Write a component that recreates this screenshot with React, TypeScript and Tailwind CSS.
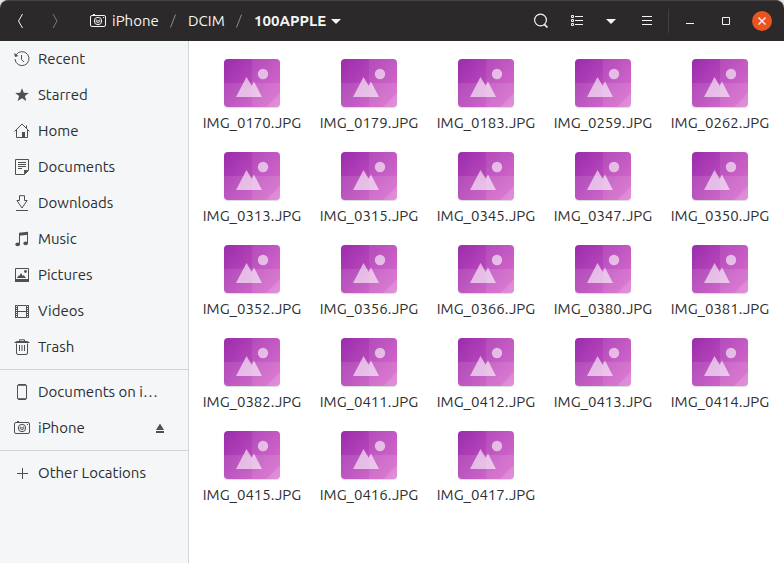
import type { ReactNode } from "react";

const files = [
  "0170", "0179", "0183", "0259", "0262",
  "0313", "0315", "0345", "0347", "0350",
  "0352", "0356", "0366", "0380", "0381",
  "0382", "0411", "0412", "0413", "0414",
  "0415", "0416", "0417",
].map((n) => `IMG_${n}.JPG`);

function Icon({ children }: { children: ReactNode }) {
  return (
    <svg className="size-4 shrink-0" viewBox="0 0 16 16" fill="none" stroke="currentColor" aria-hidden="true">
      {children}
    </svg>
  );
}

const CameraIcon = () => (
  <Icon>
    <rect x="0.5" y="2.5" width="15" height="11" rx="1.5" />
    <path d="M3 1.5h2" />
    <circle cx="8" cy="8" r="3.7" />
    <path d="M6.2 7.2a1.9 1.9 0 1 0 3.6 0" strokeWidth="0.9" />
    <path d="M6.3 6.8L8 8.4l1.7-1.6" />
    <path d="M13 4.5h1" />
  </Icon>
);

const RecentIcon = () => (
  <Icon>
    <path d="M2.2 3.7A7 7 0 1 1 1 8" />
    <path d="M7.5 4v4.5L10 11" />
    <path d="M0 2l1 4 3.5-1z" fill="currentColor" stroke="none" />
  </Icon>
);

const StarIcon = () => (
  <Icon>
    <path d="M8 1.2l1.8 4.6 5 .2-3.9 3.1 1.4 4.9L8 11.3 3.7 14l1.4-4.9L1.2 6l5-.2z" fill="currentColor" stroke="none" />
  </Icon>
);

const HomeIcon = () => (
  <Icon>
    <path d="M.6 8.4L8 1l7.4 7.4M2.5 7v7.5h11V7M12.5 2.5V5" />
    <path d="M8 9h3v5.5H8z" fill="currentColor" stroke="none" />
  </Icon>
);

const DocumentIcon = () => (
  <Icon>
    <path d="M1.5.5h13v11l-4 4h-9zM4 3.5h8M4 5.5h8M4 7.5h8M4 9.5h4" />
    <path d="M10 11h4.5L10 15.5z" fill="currentColor" stroke="none" />
  </Icon>
);

const DownloadIcon = () => (
  <Icon>
    <path d="M5.5.7h5v4.8h2.6L8 13 2.9 5.5h2.6zM2 15.5h12" />
  </Icon>
);

const MusicIcon = () => (
  <Icon>
    <path d="M5 1.8L14 .7v3L5 4.8z" fill="currentColor" stroke="none" />
    <path d="M5.5 2.5v11M13.5 1v11" />
    <ellipse cx="3.7" cy="13.3" rx="2.3" ry="1.9" fill="currentColor" stroke="none" />
    <ellipse cx="11.7" cy="12.3" rx="2.3" ry="1.9" fill="currentColor" stroke="none" />
  </Icon>
);

const PictureIcon = () => (
  <Icon>
    <path d="M1.5 1.5h13v12h-13z" />
    <path d="M1 12h14v3H1zM3 11l1.4-2.5.8.6L7 6l1.8 3 .9-1L12 11z" fill="currentColor" stroke="none" />
    <circle cx="11.5" cy="4.5" r="1.4" fill="currentColor" stroke="none" />
  </Icon>
);

const VideoIcon = () => (
  <Icon>
    <path d="M3.5 2.5h9v12h-9zM3.5 8.5h9" />
    <path d="M1.5 2v13" />
    <path d="M2.5 2v13M13.5 2v13" strokeDasharray="1 1" />
    <path d="M14.5 2v13" />
  </Icon>
);

const TrashIcon = () => (
  <Icon>
    <path d="M5.5 2V.8h5V2" />
    <path d="M1.5 3.5L3 2.5h10l1.5 1z" strokeWidth="1.2" />
    <path d="M2.5 4.5V14q0 1.5 1.5 1.5h8q1.5 0 1.5-1.5V4.5M5.5 6v6M8 6v6M10.5 6v6" />
  </Icon>
);

const PhoneIcon = () => (
  <Icon>
    <rect x="3.5" y="0.5" width="9" height="15" rx="1.5" />
    <path d="M4 1.5h8M4 14.5h8" strokeWidth="0.8" />
  </Icon>
);

const PlusIcon = () => (
  <Icon>
    <path d="M8.5 3v11M3 8.5h11" />
  </Icon>
);

const CaretIcon = () => (
  <Icon>
    <path d="M3 6h10l-5 5z" fill="currentColor" stroke="none" />
  </Icon>
);

function Slash() {
  return (
    <svg className="h-4 w-1.5 shrink-0" viewBox="0 0 6 16" stroke="#8f8d8d" aria-hidden="true">
      <path d="M5.5 1.5l-5 13" />
    </svg>
  );
}

function Place({ icon, label }: { icon: ReactNode; label: string }) {
  return (
    <a href="#" className="flex h-9 flex-1 items-center gap-2 pl-3.5 whitespace-nowrap">
      <span className="text-[#4f5050]">{icon}</span>
      <span>{label}</span>
    </a>
  );
}

const places: [ReactNode, string][] = [
  [<RecentIcon />, "Recent"],
  [<StarIcon />, "Starred"],
  [<HomeIcon />, "Home"],
  [<DocumentIcon />, "Documents"],
  [<DownloadIcon />, "Downloads"],
  [<MusicIcon />, "Music"],
  [<PictureIcon />, "Pictures"],
  [<VideoIcon />, "Videos"],
  [<TrashIcon />, "Trash"],
];

function Thumbnail() {
  return (
    <svg className="h-12 w-14 rounded shadow-[0_1px_1px_#00000026]" viewBox="0 0 56 48" aria-hidden="true">
      <defs>
        <linearGradient id="purple" x1="0" y1="0" x2="56" y2="48" gradientUnits="userSpaceOnUse">
          <stop offset="0" stopColor="#9a2dac" />
          <stop offset="1" stopColor="#d963cb" />
        </linearGradient>
      </defs>
      <path d="M0 0h56v48H0z" fill="url(#purple)" />
      <path d="M28 0h28v48H28z" fill="#fff" fillOpacity="0.08" />
      <path d="M0 24h56v24H0z" fill="#fff" fillOpacity="0.1" />
      <path d="M42 48l14-14v14z" fill="#fff" fillOpacity="0.13" />
      <path d="M12 38l10.5-20 5.2 8.7L30 22.5 38 38z" fill="#fff" fillOpacity="0.6" />
      <circle cx="39" cy="15" r="5.2" fill="#fff" fillOpacity="0.6" />
    </svg>
  );
}

export default function App() {
  return (
    <div className="flex min-h-screen flex-col bg-[#e4e4e4] font-['Ubuntu','Noto_Sans',sans-serif] text-[15px] leading-5 text-[#2c2e30]">
      <header className="flex h-[41px] items-center rounded-t-lg border-t border-[#454343] bg-[#2b2929] pr-3 text-[#f5f5f5]">
        <nav aria-label="Path" className="flex flex-1 items-center">
          <button aria-label="Back" className="ml-3 flex h-8 w-4 items-center">
            <Icon><path d="M10.5 1L6.5 8l4 7" /></Icon>
          </button>
          <button aria-label="Forward" disabled className="ml-5 flex h-8 w-4 items-center text-[#7b7979]">
            <Icon><path d="M5 1l4 7-4 7" /></Icon>
          </button>
          <button className="ml-[26px] flex w-20 items-center gap-1.5"><CameraIcon />iPhone</button>
          <Slash />
          <button className="ml-3 w-12 text-left">DCIM</button>
          <Slash />
          <button className="ml-3 flex items-center gap-0.5 font-bold">100APPLE<CaretIcon /></button>
        </nav>
        <div className="flex items-center">
          <button aria-label="Search">
            <Icon>
              <circle cx="7.5" cy="7" r="5.9" strokeWidth="1.2" />
              <path d="M11.3 11.3l3.2 3.2" strokeWidth="1.7" />
            </Icon>
          </button>
          <button aria-label="List view" className="ml-5">
            <Icon><path d="M2.5 2.5h2v2h-2zM2.5 6.5h2v2h-2zM2.5 10.5h2v2h-2zM6 3.5h8M6 7.5h8M6 11.5h8" /></Icon>
          </button>
          <button aria-label="View options" className="ml-[18px]"><CaretIcon /></button>
          <button aria-label="Menu" className="ml-5"><Icon><path d="M3 3.5h10M3 7.5h10M3 11.5h10" /></Icon></button>
        </div>
        <div className="ml-[13px] flex items-center border-l border-[#413f3f]">
          <button aria-label="Minimize" className="ml-[13px] flex h-6 w-4 items-center"><Icon><path d="M4 10.5h8" /></Icon></button>
          <button aria-label="Maximize" className="ml-5 flex h-6 w-4 items-center"><Icon><path d="M4.5 4.5h7v7h-7z" /></Icon></button>
          <button aria-label="Close" className="ml-[18px] flex size-5 items-center justify-center rounded-full bg-[#e95420]">
            <Icon><path d="M4.5 4.5l7 7M11.5 4.5l-7 7" strokeWidth="1.4" /></Icon>
          </button>
        </div>
      </header>
      <div className="flex flex-1">
        <aside className="w-[189px] shrink-0 border-r border-[#d3d4d5] bg-[#f4f6f8]">
          {places.map(([icon, label]) => (
            <div key={label} className="flex"><Place icon={icon} label={label} /></div>
          ))}
          <hr className="my-1 border-[#d3d4d5]" />
          <div className="flex"><Place icon={<PhoneIcon />} label="Documents on i…" /></div>
          <div className="flex items-center pr-5">
            <Place icon={<CameraIcon />} label="iPhone" />
            <button aria-label="Eject iPhone" className="text-[#4f5050]">
              <Icon><path d="M4 10l4-6.5 4 6.5zM4 11h8v2H4z" fill="currentColor" stroke="none" /></Icon>
            </button>
          </div>
          <hr className="my-1 border-[#d3d4d5]" />
          <div className="flex"><Place icon={<PlusIcon />} label="Other Locations" /></div>
        </aside>
        <main className="flex-1 bg-white pt-[18px] pr-1.5 pl-[5px]">
          <ul className="grid grid-cols-[repeat(auto-fill,minmax(116px,1fr))] gap-x-px gap-y-[19px]">
            {files.map((name) => (
              <li key={name} className="flex flex-col items-center gap-1.5">
                <Thumbnail />
                <span>{name}</span>
              </li>
            ))}
          </ul>
        </main>
      </div>
    </div>
  );
}
